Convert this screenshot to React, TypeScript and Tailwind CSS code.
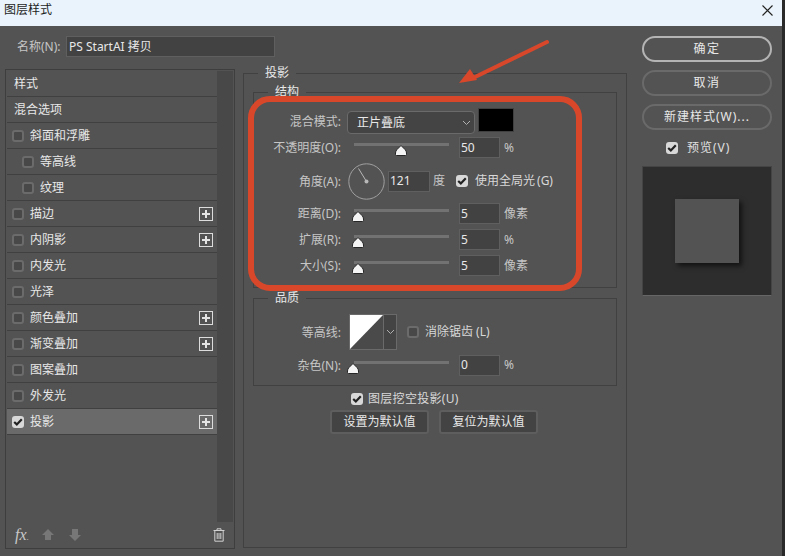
import React from "react";

function Check({ on }: { on?: boolean }) {
  return (
    <span className={"flex h-[12px] w-[12px] shrink-0 items-center justify-center rounded-[3px] " + (on ? "bg-[#d8d8d8]" : "border-2 border-[#6b6b6b] bg-[#484848]")}>
      {on && (
        <svg width="10" height="8" viewBox="0 0 10 8">
          <path d="M1.2 4 L3.8 6.4 L8.8 1.2" fill="none" stroke="#222" strokeWidth="2.2" />
        </svg>
      )}
    </span>
  );
}

function Plus() {
  return (
    <span className="flex h-[14px] w-[14px] items-center justify-center border border-[#dcdcdc]">
      <svg width="10" height="10" viewBox="0 0 10 10">
        <path d="M5 1 V9 M1 5 H9" stroke="#e4e4e4" strokeWidth="2" />
      </svg>
    </span>
  );
}

type Item = { t: string; c?: boolean; on?: boolean; ind?: boolean; plus?: boolean; sel?: boolean };
const items: Item[] = [
  { t: "样式" },
  { t: "混合选项" },
  { t: "斜面和浮雕", c: true },
  { t: "等高线", c: true, ind: true },
  { t: "纹理", c: true, ind: true },
  { t: "描边", c: true, plus: true },
  { t: "内阴影", c: true, plus: true },
  { t: "内发光", c: true },
  { t: "光泽", c: true },
  { t: "颜色叠加", c: true, plus: true },
  { t: "渐变叠加", c: true, plus: true },
  { t: "图案叠加", c: true },
  { t: "外发光", c: true },
  { t: "投影", c: true, on: true, plus: true, sel: true },
];

function Row({ it }: { it: Item }) {
  return (
    <div className={"flex h-[26px] items-center border-b border-[#404040] text-[12px] text-[#e8e8e8] " + (it.sel ? "bg-[#6a6a6a] " : "") + (it.c ? (it.ind ? "pl-[15px]" : "pl-[5px]") : "pl-[7px]")}>
      {it.c && <Check on={it.on} />}
      <span className={it.c ? "ml-[6px]" : ""}>{it.t}</span>
      {it.plus && (
        <span className="ml-auto mr-[4px]">
          <Plus />
        </span>
      )}
    </div>
  );
}

function Field({ v, w = "w-[41px]" }: { v: string; w?: string }) {
  return <div className={"flex h-[21px] items-center border border-[#5f5f5f] bg-[#424242] pl-[1px] text-[12px] text-[#e8e8e8] " + w}>{v}</div>;
}

function Slider({ at }: { at: number }) {
  return (
    <div className="relative ml-[13px] h-[21px] w-[95px] shrink-0">
      <div className="mt-[6px] h-[3px] w-[95px] bg-[#727272]" />
      <svg className="absolute top-[8px]" style={{ left: at - 6 }} width="12" height="11" viewBox="0 0 12 11">
        <path d="M6 .5 L10 4.5 Q11.5 6 11.5 8 V9.5 Q11.5 10.5 10.5 10.5 H1.5 Q.5 10.5 .5 9.5 V8 Q.5 6 2 4.5 Z" fill="#f4f4f4" stroke="#262626" strokeWidth="1" />
      </svg>
    </div>
  );
}

function Label({ t }: { t: string }) {
  return <span className="w-[87px] shrink-0 text-right text-[12px] leading-[21px] text-[#c6c6c6]">{t}</span>;
}

function SliderRow({ label, at, v, unit, cls }: { label: string; at: number; v: string; unit: string; cls: string }) {
  return (
    <div className={"flex h-[21px] items-center " + cls}>
      <Label t={label} />
      <Slider at={at} />
      <div className="ml-[10px]">
        <Field v={v} />
      </div>
      <span className="ml-[4px] text-[12px] text-[#c6c6c6]">{unit}</span>
    </div>
  );
}

function Legend({ t, cls }: { t: string; cls: string }) {
  return <span className={"absolute top-[-9px] bg-[#535353] px-[7px] text-[12px] leading-[16px] text-[#e8e8e8] " + cls}>{t}</span>;
}

function PillBtn({ t, main, cls }: { t: React.ReactNode; main?: boolean; cls?: string }) {
  return (
    <div className={"flex h-[26px] w-[130px] items-center justify-center rounded-full border-2 text-[12px] text-[#e8e8e8] " + (main ? "border-[#b4b4b4] " : "border-[#6a6a6a] ") + (cls || "")}>
      {t}
    </div>
  );
}

export default function App() {
  return (
    <div className="flex h-[556px] w-[785px] overflow-hidden bg-[#2a2a2a] font-['Noto_Sans','Noto_Sans_CJK_SC',sans-serif]">
      <div className="flex w-[782px] shrink-0 flex-col">
        <div className="flex h-[26px] shrink-0 items-center justify-between bg-[#eaf3fb] pb-[6px] pl-[4px] pr-[9px] text-[12px] text-[#1c1c1c]">
          <span>图层样式</span>
          <svg width="11" height="11" viewBox="0 0 11 11">
            <path d="M.5 .5 L10.5 10.5 M10.5 .5 L.5 10.5" stroke="#222" strokeWidth="1.1" />
          </svg>
        </div>

        <div className="relative flex flex-1 bg-[#535353]">
          <div className="w-[642px] shrink-0 pt-[10px]">
            <div className="flex h-[21px] items-center">
              <span className="ml-[17px] w-[49px] text-[12px] text-[#c6c6c6]">名称(N):</span>
              <div className="flex h-[21px] w-[209px] items-center border border-[#5f5f5f] bg-[#424242] pl-[2px] text-[12px] text-[#e8e8e8]">PS StartAI 拷贝</div>
            </div>

            <div className="mt-[12px] flex">
              <div className="ml-[5px] flex h-[480px] w-[230px] shrink-0 flex-col border border-[#3e3e3e] pl-[1px] pt-[1px]">
                <div className="flex h-[451px] shrink-0">
                  <div className="w-[210px] shrink-0">
                    {items.map((it) => (
                      <Row key={it.t} it={it} />
                    ))}
                  </div>
                  <div className="w-[16px] bg-[#484848]" />
                </div>
                <div className="flex flex-1 items-center pl-[8px] pr-[9px] text-[#c8c8c8]">
                  <span className="w-[26px] font-['Liberation_Serif',serif] text-[16px] italic leading-none">
                    fx<span className="text-[9px] not-italic">.</span>
                  </span>
                  <svg width="14" height="14" viewBox="0 0 14 14">
                    <path d="M7 1 L13 7 H10 V12 H4 V7 H1 Z" fill="#777" />
                  </svg>
                  <svg className="ml-[13px]" width="14" height="14" viewBox="0 0 14 14">
                    <path d="M4 1 H10 V7 H13 L7 13 L1 7 H4 Z" fill="#777" />
                  </svg>
                  <svg className="ml-auto" width="12" height="14" viewBox="0 0 12 14">
                    <path d="M.5 2.5 H11.5 M4 2.5 V.8 H8 V2.5 M1.8 2.5 V13.2 H10.2 V2.5 M4.2 5 V11 M6 5 V11 M7.8 5 V11" fill="none" stroke="#d0d0d0" strokeWidth="1" />
                  </svg>
                </div>
              </div>

              <div className="relative ml-[8px] mt-[4px] h-[475px] w-[384px] shrink-0 border border-[#414141] px-[9px] pt-[18px]">
                <Legend t="投影" cls="left-[14px]" />

                <div className="relative h-[196px] border border-[#414141] pt-[15px]">
                  <Legend t="结构" cls="left-[14px]" />
                  <div className="flex h-[28px]">
                    <span className="w-[87px] shrink-0 pt-[3px] text-right text-[12px] leading-[21px] text-[#c6c6c6]">混合模式:</span>
                    <div className="ml-[6px] mt-[3px] flex h-[23px] w-[128px] items-center justify-between rounded-[4px] border border-[#6a6a6a] bg-[#444444] pl-[9px] pr-[3px] text-[12px] text-[#e8e8e8]">
                      <span>正片叠底</span>
                      <svg width="9" height="6" viewBox="0 0 9 6">
                        <path d="M1 1 L4.5 4.5 L8 1" fill="none" stroke="#b0b0b0" strokeWidth="1" />
                      </svg>
                    </div>
                    <div className="ml-[3px] h-[24px] w-[36px] border border-[#404040] bg-black" />
                  </div>

                  <SliderRow label="不透明度(O):" at={47} v="50" unit="%" cls="mt-[1px]" />

                  <div className="mt-[5px] flex h-[36px] items-center">
                    <Label t="角度(A):" />
                    <svg className="ml-[7px] shrink-0" width="37" height="37" viewBox="0 0 37 37">
                      <circle cx="18.5" cy="18.5" r="17.7" fill="none" stroke="#a0a0a0" strokeWidth="1" />
                      <path d="M18.5 18.5 L10.5 5.5" stroke="#b8b8b8" strokeWidth="1" />
                      <circle cx="18.5" cy="18.5" r="2" fill="#b8b8b8" />
                    </svg>
                    <div className="ml-[3px]">
                      <Field v="121" w="w-[42px]" />
                    </div>
                    <span className="ml-[3px] text-[12px] text-[#c6c6c6]">度</span>
                    <span className="ml-[11px]">
                      <Check on />
                    </span>
                    <span className="ml-[7px] text-[12px] text-[#d8d8d8]">
                      使用全局光<span className="ml-[2px]">(G)</span>
                    </span>
                  </div>

                  <SliderRow label="距离(D):" at={4} v="5" unit="像素" cls="mt-[4px]" />
                  <SliderRow label="扩展(R):" at={4} v="5" unit="%" cls="mt-[5px]" />
                  <SliderRow label="大小(S):" at={4} v="5" unit="像素" cls="mt-[5px]" />
                </div>

                <div className="relative mt-[10px] h-[88px] border border-[#414141] pt-[15px]">
                  <Legend t="品质" cls="left-[14px]" />
                  <div className="flex h-[36px] items-center">
                    <Label t="等高线:" />
                    <div className="ml-[8px] flex h-[36px] w-[48px] border border-[#6a6a6a] bg-[#444444]">
                      <svg className="shrink-0" width="33" height="34" viewBox="0 0 33 34">
                        <rect width="33" height="34" fill="#4a4a4a" />
                        <path d="M0 0 H33 L0 34 Z" fill="#fff" />
                      </svg>
                      <div className="flex flex-1 items-center justify-center border-l border-[#6a6a6a]">
                        <svg width="9" height="6" viewBox="0 0 9 6">
                          <path d="M1 1 L4.5 4.5 L8 1" fill="none" stroke="#b0b0b0" strokeWidth="1" />
                        </svg>
                      </div>
                    </div>
                    <span className="ml-[10px]">
                      <Check />
                    </span>
                    <span className="ml-[6px] text-[12px] text-[#d8d8d8]">消除锯齿 (L)</span>
                  </div>
                  <div className="mt-[4px] flex h-[22px] items-center">
                    <Label t="杂色(N):" />
                    <Slider at={-1} />
                    <div className="ml-[10px]">
                      <Field v="0" />
                    </div>
                    <span className="ml-[4px] text-[12px] text-[#c6c6c6]">%</span>
                  </div>
                </div>

                <div className="mt-[5px] flex h-[16px] items-center pl-[98px]">
                  <Check on />
                  <span className="ml-[5px] text-[12px] tracking-[0.3px] text-[#d8d8d8]">图层挖空投影(U)</span>
                </div>
                <div className="mt-[3px] flex pl-[77px]">
                  <div className="flex h-[24px] w-[99px] items-center justify-center rounded-[3px] border-2 border-[#5e5e5e] bg-[#434343] text-[12px] text-[#e8e8e8]">设置为默认值</div>
                  <div className="ml-[10px] flex h-[24px] w-[99px] items-center justify-center rounded-[3px] border-2 border-[#5e5e5e] bg-[#434343] text-[12px] text-[#e8e8e8]">复位为默认值</div>
                </div>
              </div>
            </div>
          </div>

          <div className="w-[130px] shrink-0 pt-[10px]">
            <PillBtn t={<span className="tracking-[1.5px]">确定</span>} main />
            <PillBtn t={<span className="tracking-[1.5px]">取消</span>} cls="mt-[8px]" />
            <PillBtn t={<span className="tracking-[1px]">新建样式(W)...</span>} cls="mt-[8px]" />
            <div className="mt-[11px] flex h-[14px] items-center pl-[24px]">
              <Check on />
              <span className="ml-[9px] text-[12px] tracking-[1px] text-[#e0e0e0]">预览(V)</span>
            </div>
            <div className="mt-[11px] flex h-[130px] w-[130px] items-center justify-center border border-[#444444] border-b-[#666666] bg-[#2d2d2d]">
              <div className="h-[64px] w-[64px] bg-[#535353] shadow-[3px_3px_5px_rgba(0,0,0,0.6)]" />
            </div>
          </div>

          <div className="pointer-events-none absolute left-[248px] top-[70px] h-[195px] w-[334px] rounded-[22px] border-[6px] border-[#d9472b]" />
          <svg className="pointer-events-none absolute left-[455px] top-[10px]" width="100" height="52" viewBox="0 0 100 52">
            <path d="M92 6 L18 42" stroke="#d9472b" strokeWidth="4" strokeLinecap="round" />
            <path d="M4 47 L15 33 L22 44 Z" fill="#d9472b" />
          </svg>
        </div>
      </div>
    </div>
  );
}
